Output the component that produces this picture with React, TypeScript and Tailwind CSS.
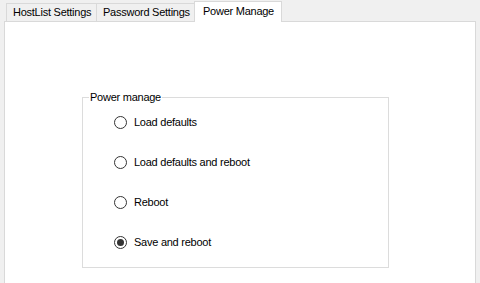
import { useState } from "react";

const options = ["Load defaults", "Load defaults and reboot", "Reboot", "Save and reboot"];

function Radio({ label, checked, onSelect }: { label: string; checked: boolean; onSelect: () => void }) {
    return (
        <button onClick={onSelect} className="flex h-[40px] items-center gap-[7px] whitespace-nowrap text-left">
            <span className="flex h-[13px] w-[13px] items-center justify-center rounded-full border border-[#333333] bg-white">
                {checked && <span className="h-[7px] w-[7px] rounded-full bg-[#333333]" />}
            </span>
            <span>{label}</span>
        </button>
    );
}

export default function App() {
    const [selected, setSelected] = useState(3);

    return (
        <div className="h-[283px] w-[480px] overflow-hidden whitespace-nowrap bg-[#f0f0f0] text-[11px] leading-[13px] tracking-[-0.25px] text-black [font-family:'Liberation_Sans',Arial,sans-serif]">
            <div className="flex h-[21px] items-end pl-[6px]">
                <div className="flex h-[18px] w-[91px] items-center border border-b-0 border-[#d9d9d9] pl-[6px]">HostList Settings</div>
                <div className="flex h-[18px] w-[98px] items-center border border-b-0 border-l-0 border-[#d9d9d9] pl-[6px]">Password Settings</div>
                <div className="relative z-10 -mb-px -ml-px flex h-[21px] w-[88px] items-start border border-b-0 border-[#d9d9d9] bg-white pl-[8px] pt-[3px]">
                    Power Manage
                </div>
            </div>
            <div className="ml-[4px] h-[300px] w-[472px] border border-[#d9d9d9] bg-white pl-[77px] pt-[69px]">
                <fieldset className="h-[177px] w-[307px] border border-[#dcdcdc] pl-[31px]">
                    <legend className="-ml-[25px] px-[1px]">Power manage</legend>
                    <div className="-mt-[2px] flex flex-col">
                        {options.map((o, i) => (
                            <Radio key={o} label={o} checked={selected === i} onSelect={() => setSelected(i)} />
                        ))}
                    </div>
                </fieldset>
            </div>
        </div>
    );
}
